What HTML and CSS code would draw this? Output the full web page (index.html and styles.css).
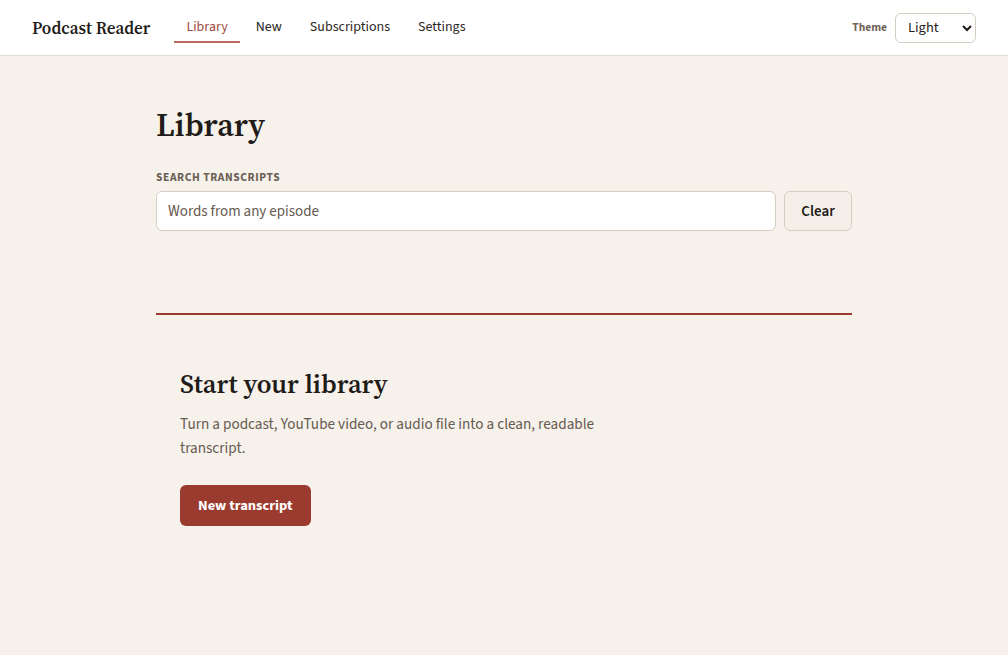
FILE: index.html
```html
<!DOCTYPE html>
<html lang="en">
<head>
    <meta charset="UTF-8">
    <meta name="viewport" content="width=device-width, initial-scale=1.0">
    <title>Podcast Reader</title>
    <link rel="stylesheet" href="styles.css">
</head>
<body>
    <header class="topbar">
        <div class="brand">Podcast Reader</div>
        <nav class="nav">
            <a href="#" class="nav-link active">Library</a>
            <a href="#" class="nav-link">New</a>
            <a href="#" class="nav-link">Subscriptions</a>
            <a href="#" class="nav-link">Settings</a>
        </nav>
        <div class="theme">
            <label for="theme">Theme</label>
            <select id="theme" name="theme">
                <option>Light</option>
                <option>Dark</option>
                <option>Sepia</option>
            </select>
        </div>
    </header>

    <main class="container">
        <h1>Library</h1>

        <!-- Recherche -->
        <div class="search">
            <label for="q" class="search-label">Search transcripts</label>
            <div class="search-row">
                <input type="text" id="q" name="q" placeholder="Words from any episode">
                <button type="button" class="btn-clear">Clear</button>
            </div>
        </div>

        <!-- Bibliothèque vide -->
        <section class="empty">
            <h2>Start your library</h2>
            <p>Turn a podcast, YouTube video, or audio file into a clean, readable transcript.</p>
            <button type="button" class="btn-primary">New transcript</button>
        </section>
    </main>
</body>
</html>
```

FILE: styles.css
```css
body {
    font-family: "Source Sans 3", "Source Sans Pro", Lato, sans-serif;
    background-color: #f6f2eb;
    color: #1f1b18;
    margin: 0;
}

.topbar {
    display: flex;
    align-items: center;
    height: 55px;
    padding: 0 32px;
    background-color: #fff;
    border-bottom: 1px solid #e3ddd3;
}

.brand {
    font-family: "Source Serif 4", "DejaVu Serif", serif;
    font-size: 17px;
    font-weight: 600;
    margin-right: 24px;
}

.nav {
    display: flex;
    align-self: flex-start;
    gap: 4px;
    margin-top: 12px;
}

.nav-link {
    display: flex;
    align-items: center;
    padding: 0 12px;
    height: 29px;
    font-size: 14px;
    color: #2a2624;
    text-decoration: none;
    border-bottom: 2px solid transparent;
}

.nav-link.active {
    color: #a14a3f;
    border-bottom-color: #b86b5e;
}

.theme {
    margin-left: auto;
    display: flex;
    align-items: center;
    gap: 8px;
}

.theme label {
    font-size: 11.5px;
    font-weight: bold;
    color: #75665a;
}

.theme select {
    font-family: inherit;
    font-size: 14.5px;
    width: 81px;
    height: 30px;
    padding: 0 8px;
    background-color: #fff;
    border: 1px solid #d5cdc1;
    border-radius: 6px;
    color: #1f1b18;
}

.container {
    width: 696px;
    margin: 0 auto;
    padding-top: 49px;
}

h1 {
    font-family: "Source Serif 4", "DejaVu Serif", serif;
    font-size: 32px;
    font-weight: 600;
    margin: 0 0 24px;
    line-height: 40px;
}

.search-label {
    display: block;
    font-size: 11.5px;
    font-weight: bold;
    text-transform: uppercase;
    letter-spacing: 0.6px;
    color: #6b5e55;
    margin-bottom: 5px;
}

.search-row {
    display: flex;
    gap: 8px;
}

.search-row input {
    flex: 1;
    height: 40px;
    padding: 0 11px;
    font-family: inherit;
    font-size: 15px;
    border: 1px solid #d5cdc1;
    border-radius: 6px;
    box-sizing: border-box;
    background-color: #fff;
}

.search-row input::placeholder {
    color: #66594f;
}

.btn-clear {
    width: 68px;
    height: 40px;
    font-family: inherit;
    font-size: 15px;
    font-weight: 600;
    color: #1f1b18;
    background-color: #f4f0e9;
    border: 1px solid #d5cdc1;
    border-radius: 6px;
    cursor: pointer;
}

.empty {
    margin-top: 82px;
    border-top: 2px solid #9a3a2e;
    padding: 52px 24px;
}

.empty h2 {
    font-family: "Source Serif 4", "DejaVu Serif", serif;
    font-size: 26.5px;
    font-weight: 600;
    line-height: 34px;
    margin: 0 0 11px;
}

.empty p {
    max-width: 440px;
    font-size: 15.2px;
    line-height: 24px;
    color: #66594f;
    margin: 0 0 25px;
}

.btn-primary {
    height: 41px;
    padding: 0 18px;
    font-family: inherit;
    font-size: 14.5px;
    font-weight: bold;
    color: #fff;
    background-color: #9b3a2e;
    border: none;
    border-radius: 6px;
    cursor: pointer;
}

.btn-primary:hover {
    opacity: 0.9;
}
```
